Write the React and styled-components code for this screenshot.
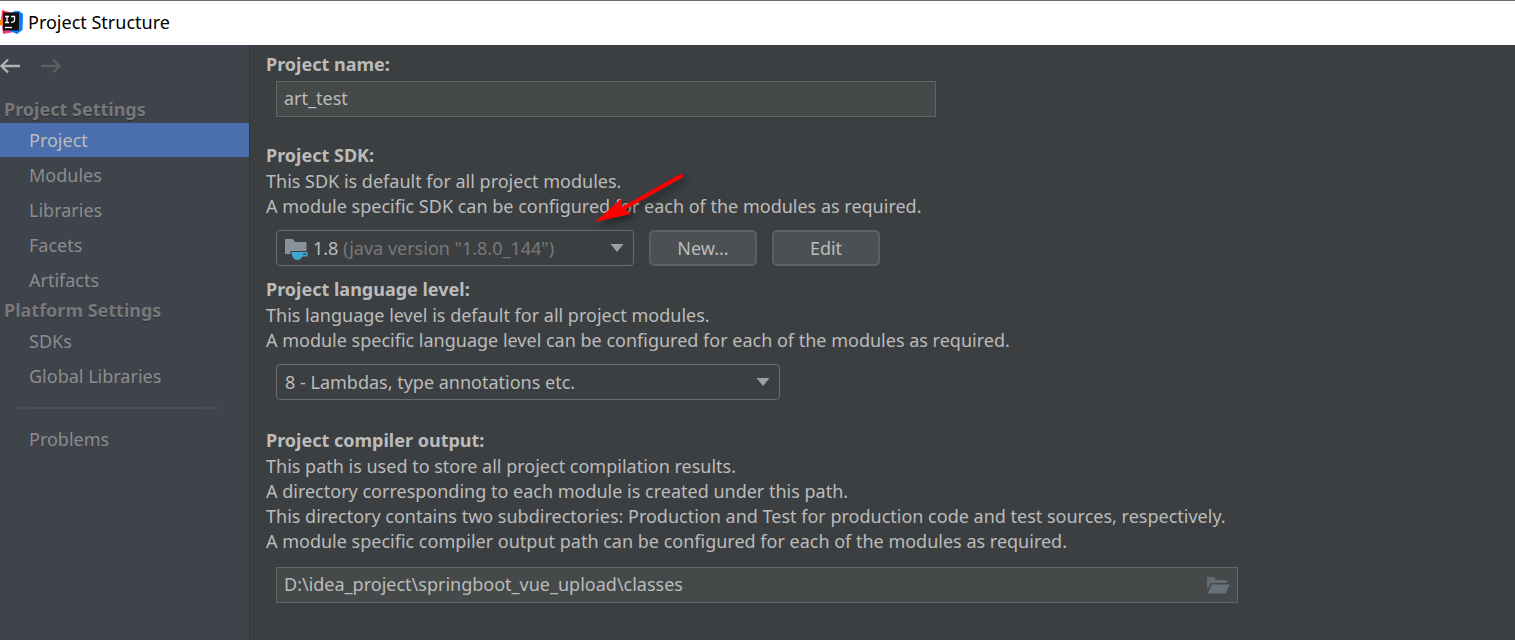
import React from "react";
import styled, { createGlobalStyle } from "styled-components";

const GlobalStyle = createGlobalStyle`
  * { box-sizing: border-box; }
  html, body, #root { height: 100%; }
  body {
    margin: 0;
    background: #3c3f41;
    color: #bbbbbb;
    font-family: "Noto Sans", "Open Sans", sans-serif;
    font-size: 18px;
  }
  button, input, select { font: inherit; color: inherit; }
`;

const Window = styled.div`
  min-height: 100%;
  display: flex;
  flex-direction: column;
  border-top: 1px solid #6b6b6b;
`;

const TitleBar = styled.header`
  display: flex;
  align-items: center;
  gap: 5px;
  height: 44px;
  padding-bottom: 2px;
  background: #ffffff;
  color: #000000;
`;

const WindowTitle = styled.h1`
  margin: 0;
  font-size: 18px;
  font-weight: 400;
  line-height: 24px;
`;

const Body = styled.div`
  flex: 1;
  display: flex;
`;

const Sidebar = styled.nav`
  flex: none;
  width: 250px;
  background: #3e434c;
  border-right: 1px solid #323436;
`;

const History = styled.div`
  display: flex;
  gap: 21px;
  height: 42px;
  margin-bottom: 9px;
`;

const HistoryButton = styled.button`
  display: flex;
  padding: 0;
  border: 0;
  background: none;
  width: 20px;
  height: 42px;
  align-items: center;
  color: #afb1b3;
  &:disabled { color: #5c5e60; }
`;

const GroupTitle = styled.h2`
  margin: 0;
  padding-left: 4px;
  font-size: 18px;
  font-weight: 700;
  line-height: 26px;
  color: #787878;
  text-shadow: 0 1px 0 #2c2f34;
`;

const List = styled.ul`
  display: grid;
  gap: 1px;
  margin: 0;
  padding: 1px 0 0;
  list-style: none;
`;

const Item = styled.a`
  display: block;
  padding-left: 29px;
  line-height: 34px;
  text-decoration: none;
  color: ${(p) => (p.$active ? "#bbbbbb" : "#8c8c8c")};
  background: ${(p) => (p.$active ? "#4b6eaf" : "transparent")};
`;

const Divider = styled.hr`
  height: 2px;
  margin: 14px 12px 12px 0;
  border: 0;
  background: linear-gradient(90deg, transparent, #515151 16%, #515151 80%, transparent);
`;

const Content = styled.main`
  flex: 1;
  min-width: 0;
  padding: 6px 16px;
`;

const Section = styled.section`
  margin-bottom: ${(p) => p.$after}px;
`;

const Heading = styled.label`
  display: block;
  margin-bottom: 1px;
  font-weight: 700;
  line-height: 26px;
`;

const Note = styled.p`
  margin: 0;
  line-height: 25px;
`;

const Controls = styled.div`
  display: flex;
  gap: 15px;
  margin: ${(p) => p.$before}px 10px 0;
`;

const TextField = styled.div`
  flex: 0 1 ${(p) => p.$basis}px;
  display: flex;
  align-items: center;
  height: 36px;
  padding: 0 7px;
  background: #45494a;
  border: 1px solid #646464;
`;

const TextInput = styled.input`
  flex: 1;
  min-width: 0;
  padding: 0 0 2px;
  border: 0;
  outline: 0;
  background: none;
`;

const BrowseButton = styled.button`
  display: flex;
  padding: 0;
  border: 0;
  background: none;
`;

const Combo = styled.div`
  flex: 0 1 ${(p) => p.$basis}px;
  display: grid;
  align-items: center;
  height: 36px;
  border: 1px solid #6c6c6c;
  border-radius: 4px;
  & > * { grid-area: 1 / 1; }
`;

const Select = styled.select`
  appearance: none;
  width: 100%;
  height: 34px;
  padding: 0 32px 0 8px;
  border: 0;
  outline: 0;
  background: transparent;
  color: ${(p) => (p.$custom ? "transparent" : "inherit")};
`;

const ComboValue = styled.span`
  display: flex;
  align-items: center;
  gap: 5px;
  padding-left: 8px;
  line-height: 24px;
  pointer-events: none;
  white-space: nowrap;
`;

const Muted = styled.span`
  color: #787878;
`;

const ComboArrow = styled.svg`
  justify-self: end;
  margin-right: 9px;
  pointer-events: none;
`;

const Button = styled.button`
  width: 108px;
  height: 36px;
  padding: 0;
  background: #4c5052;
  border: 2px solid #5e6060;
  border-radius: 5px;
`;

const Anchor = styled.div`
  position: relative;
`;

const Pointer = styled.svg`
  position: absolute;
  left: 320px;
  top: -70px;
  overflow: visible;
  pointer-events: none;
  filter: drop-shadow(4px 4px 3px rgba(0, 0, 0, 0.4));
`;

function Logo() {
  return (
    <svg width="23" height="26" viewBox="0 0 23 26" aria-hidden="true">
      <path d="M2 1L12 4L8 13L1 12Z" fill="#fe315d" />
      <path d="M0 11L6 9V18L0 16Z" fill="#fc801d" />
      <path d="M2 17L8 14L14 23L3 25Z" fill="#e8417a" />
      <path d="M11 4L15 2L19 2L23 5L22.500 21L17 25L10 22Z" fill="#087cfa" />
      <rect x="3" y="3.500" width="16" height="18" fill="#101010" />
      <path d="M5 7.500H9M7 7.500V13M5 13.500H9M11 7.500H14.500V11Q14.500 13.500 11 13.300" stroke="#fff" strokeWidth="1.3" fill="none" />
      <path d="M5 18.500H12" stroke="#fff" strokeWidth="1.3" />
    </svg>
  );
}

function Arrow({ flip }) {
  return (
    <svg width="20" height="16" viewBox="0 0 20 16" fill="none" stroke="currentColor" strokeWidth="2.4" aria-hidden="true">
      <path d={flip ? "M0 8H18M12 1.5L18.5 8L12 14.5" : "M20 8H2M8 1.5L1.5 8L8 14.5"} />
    </svg>
  );
}

function Triangle() {
  return (
    <ComboArrow width="14" height="8" viewBox="0 0 14 8" aria-hidden="true">
      <path d="M0.500 0H13.500L7 8Z" fill="#9da0a2" />
    </ComboArrow>
  );
}

function JdkIcon() {
  return (
    <svg width="23" height="24" viewBox="0 0 23 24" aria-hidden="true">
      <path d="M0 3H7.500L10.500 6H21.500V15H5.500V18H0Z" fill="#87939a" />
      <path d="M6.500 16H22.500V20.500H17.500Q15.500 24 12 24Q7 23.500 6.500 16Z" fill="#40a9d1" />
      <path d="M18.500 17.500H21V19H18.200Z" fill="#3c3f41" />
    </svg>
  );
}

function FolderIcon() {
  return (
    <svg width="23" height="18" viewBox="0 0 23 18" aria-hidden="true">
      <path d="M0 14V1H7L9 4H20V7H4Z" fill="#626b70" />
      <path d="M5 8.500H23L18.500 17.500H0.500Z" fill="#67737a" />
    </svg>
  );
}

function NavList({ items, active }) {
  return (
    <List>
      {items.map((name) => (
        <li key={name}>
          <Item href="#" $active={name === active}>{name}</Item>
        </li>
      ))}
    </List>
  );
}

export default function App() {
  return (
    <Window>
      <GlobalStyle />
      <TitleBar>
        <Logo />
        <WindowTitle>Project Structure</WindowTitle>
      </TitleBar>
      <Body>
        <Sidebar>
          <History>
            <HistoryButton aria-label="Back"><Arrow /></HistoryButton>
            <HistoryButton aria-label="Forward" disabled><Arrow flip /></HistoryButton>
          </History>
          <GroupTitle>Project Settings</GroupTitle>
          <NavList items={["Project", "Modules", "Libraries", "Facets", "Artifacts"]} active="Project" />
          <GroupTitle>Platform Settings</GroupTitle>
          <NavList items={["SDKs", "Global Libraries"]} />
          <Divider />
          <NavList items={["Problems"]} />
        </Sidebar>
        <Content>
          <Section $after={25}>
            <Heading htmlFor="name">Project name:</Heading>
            <Controls $before={4}>
              <TextField $basis={660}>
                <TextInput id="name" defaultValue="art_test" />
              </TextField>
            </Controls>
          </Section>
          <Section $after={10}>
            <Heading htmlFor="sdk">Project SDK:</Heading>
            <Note>This SDK is default for all project modules.</Note>
            <Note>A module specific SDK can be configured for each of the modules as required.</Note>
            <Anchor>
              <Controls $before={11}>
                <Combo $basis={358}>
                  <Select id="sdk" $custom>
                    <option>1.8</option>
                  </Select>
                  <ComboValue aria-hidden="true">
                    <JdkIcon />
                    <span>1.8 <Muted>(java version "1.8.0_144")</Muted></span>
                  </ComboValue>
                  <Triangle />
                </Combo>
                <Button>New...</Button>
                <Button>Edit</Button>
              </Controls>
              <Pointer width="100" height="64" viewBox="0 0 100 64" aria-hidden="true">
                <path d="M95 16L38 48" stroke="#ff0000" strokeWidth="4" strokeLinecap="round" />
                <path d="M9 62L36 38V46L40 50L45 54Z" fill="#ff0000" />
              </Pointer>
            </Anchor>
          </Section>
          <Section $after={27}>
            <Heading htmlFor="level">Project language level:</Heading>
            <Note>This language level is default for all project modules.</Note>
            <Note>A module specific language level can be configured for each of the modules as required.</Note>
            <Controls $before={11}>
              <Combo $basis={504}>
                <Select id="level">
                  <option>8 - Lambdas, type annotations etc.</option>
                </Select>
                <Triangle />
              </Combo>
            </Controls>
          </Section>
          <Section $after={0}>
            <Heading htmlFor="output">Project compiler output:</Heading>
            <Note>This path is used to store all project compilation results.</Note>
            <Note>A directory corresponding to each module is created under this path.</Note>
            <Note>This directory contains two subdirectories: Production and Test for production code and test sources, respectively.</Note>
            <Note>A module specific compiler output path can be configured for each of the modules as required.</Note>
            <Controls $before={13}>
              <TextField $basis={962}>
                <TextInput id="output" defaultValue="D:\idea_project\springboot_vue_upload\classes" />
                <BrowseButton aria-label="Browse"><FolderIcon /></BrowseButton>
              </TextField>
            </Controls>
          </Section>
        </Content>
      </Body>
    </Window>
  );
}
